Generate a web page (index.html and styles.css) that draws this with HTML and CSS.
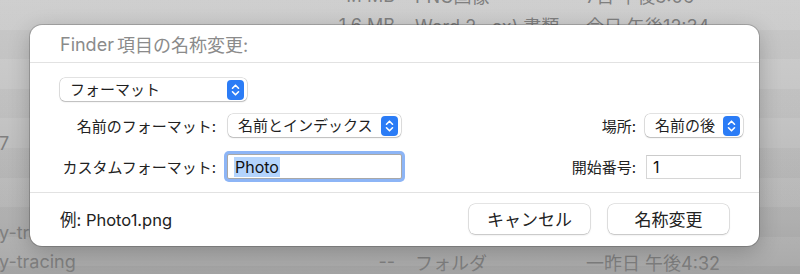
FILE: index.html
```html
<!DOCTYPE html>
<html lang="ja">
<head>
<meta charset="utf-8">
<title>Finder項目の名称変更</title>
<link rel="stylesheet" href="styles.css">
</head>
<body>
<div class="finder">
  <div class="frow"><span class="fname"></span><span class="fsize">1.1 MB</span><span class="fkind">PNG画像</span><span class="fdate">7日 午後3:06</span></div>
  <div class="frow"><span class="fname"></span><span class="fsize">1.6 MB</span><span class="fkind">Word 2...ex) 書類</span><span class="fdate">今日 午後12:34</span></div>
  <div class="frow"><span class="fname"></span><span class="fsize"></span><span class="fkind"></span><span class="fdate"></span></div>
  <div class="frow"><span class="fname"></span><span class="fsize"></span><span class="fkind"></span><span class="fdate"></span></div>
  <div class="frow"><span class="fname"></span><span class="fsize"></span><span class="fkind"></span><span class="fdate"></span></div>
  <div class="frow"><span class="fname">7</span><span class="fsize"></span><span class="fkind"></span><span class="fdate"></span></div>
  <div class="frow"><span class="fname"></span><span class="fsize"></span><span class="fkind"></span><span class="fdate"></span></div>
  <div class="frow"><span class="fname"></span><span class="fsize"></span><span class="fkind"></span><span class="fdate"></span></div>
  <div class="frow"><span class="fname">y-tracing</span><span class="fsize"></span><span class="fkind"></span><span class="fdate"></span></div>
  <div class="frow"><span class="fname">y-tracing</span><span class="fsize">--</span><span class="fkind">フォルダ</span><span class="fdate">一昨日 午後4:32</span></div>
</div>

<div class="sheet">
  <div class="sheet-title"><span class="app">Finder</span>項目の名称変更:</div>
  <div class="sheet-body">
    <div class="popup popup-format">
      <span>フォーマット</span>
      <svg class="stepper" viewBox="0 0 17 20" width="17" height="20"><rect x="0" y="0" width="17" height="20" rx="4" fill="#2b7cf6"/><path d="M5.5 8.2 L8.5 5.2 L11.5 8.2 M5.5 11.8 L8.5 14.8 L11.5 11.8" fill="none" stroke="#fff" stroke-width="1.6" stroke-linecap="round" stroke-linejoin="round"/></svg>
    </div>
    <div class="form-grid">
      <label class="lbl">名前のフォーマット:</label>
      <div class="popup popup-name">
        <span>名前とインデックス</span>
        <svg class="stepper" viewBox="0 0 17 20" width="17" height="20"><rect x="0" y="0" width="17" height="20" rx="4" fill="#2b7cf6"/><path d="M5.5 8.2 L8.5 5.2 L11.5 8.2 M5.5 11.8 L8.5 14.8 L11.5 11.8" fill="none" stroke="#fff" stroke-width="1.6" stroke-linecap="round" stroke-linejoin="round"/></svg>
      </div>
      <span class="spacer"></span>
      <label class="lbl">場所:</label>
      <div class="popup popup-place">
        <span>名前の後</span>
        <svg class="stepper" viewBox="0 0 17 20" width="17" height="20"><rect x="0" y="0" width="17" height="20" rx="4" fill="#2b7cf6"/><path d="M5.5 8.2 L8.5 5.2 L11.5 8.2 M5.5 11.8 L8.5 14.8 L11.5 11.8" fill="none" stroke="#fff" stroke-width="1.6" stroke-linecap="round" stroke-linejoin="round"/></svg>
      </div>

      <label class="lbl">カスタムフォーマット:</label>
      <div class="field field-focus"><span class="sel">Photo</span></div>
      <span class="spacer"></span>
      <label class="lbl">開始番号:</label>
      <div class="field field-num">1</div>
    </div>
  </div>
  <div class="sheet-footer">
    <span class="example">例: Photo1.png</span>
    <div class="buttons">
      <button class="btn">キャンセル</button>
      <button class="btn">名称変更</button>
    </div>
  </div>
</div>
</body>
</html>
```

FILE: styles.css
```css
* { box-sizing: border-box; }

html, body {
  margin: 0;
  padding: 0;
}

body {
  width: 800px;
  height: 274px;
  overflow: hidden;
  position: relative;
  font-family: "Inter", "Noto Sans CJK JP", sans-serif;
  background:
    repeating-linear-gradient(180deg, rgba(255,255,255,0.035) 0 29.6px, rgba(0,0,0,0.02) 29.6px 59.2px),
    linear-gradient(180deg, #cdcdcd 0%, #c3c3c3 40%, #b2b2b2 80%, #a6a6a6 100%);
}

/* Finder list behind the sheet */
.finder {
  margin-top: -19.4px;
  color: #7f7f7f;
  font-size: 18px;
}

.frow {
  display: flex;
  align-items: center;
  height: 29.6px;
  white-space: nowrap;
}

.fname {
  width: 336px;
  margin-left: -1px;
}

.fsize {
  width: 60px;
  text-align: right;
}

.fkind {
  width: 171px;
  margin-left: 20px;
}

/* Sheet */
.sheet {
  position: absolute;
  left: 30px;
  top: 25px;
  width: 729px;
  height: 221px;
  background: #ffffff;
  border-radius: 12px;
  box-shadow: 0 0 0 1px rgba(0,0,0,0.18), 0 6px 22px rgba(0,0,0,0.22);
  display: flex;
  flex-direction: column;
  color: #222;
}

.sheet-title {
  height: 38px;
  border-bottom: 1px solid #e2e2e2;
  display: flex;
  align-items: center;
  padding-left: 30px;
  font-size: 18px;
  color: #8b8b8b;
  padding-top: 1px;
}

.sheet-title .app {
  margin-right: 3px;
}

.sheet-body {
  padding: 15px 16px 13px 30px;
  border-bottom: 1px solid #e2e2e2;
}

.popup {
  display: flex;
  align-items: center;
  justify-content: space-between;
  height: 23px;
  background: #fff;
  border-radius: 5px;
  box-shadow: 0 0 0 0.5px rgba(0,0,0,0.22), 0 1px 1.5px rgba(0,0,0,0.18);
  padding-left: 10px;
  padding-right: 3px;
  font-size: 15px;
  color: #1f1f1f;
}

.popup span {
  line-height: 1;
}

.stepper {
  display: block;
  flex: none;
}

.popup-format {
  width: 187px;
}

.form-grid {
  margin-top: 13px;
  display: grid;
  grid-template-columns: 156px 176px 1fr auto 97px;
  column-gap: 10px;
  row-gap: 17px;
  align-items: center;
}

.lbl {
  font-size: 15px;
  text-align: right;
  color: #222;
  white-space: nowrap;
}

.popup-name {
  margin-left: 2px;
  width: 173px;
  padding-left: 10px;
}

.popup-place {
  margin-left: -1px;
  width: 98px;
  padding-left: 10px;
}

.field {
  height: 25px;
  display: flex;
  align-items: center;
  background: #fff;
  font-size: 16px;
  color: #111;
}

.field-focus {
  margin-left: 1px;
  border: 1px solid #a8a8a8;
  border-radius: 2px;
  box-shadow: 0 0 0 3px #8db5f6;
  padding-left: 6px;
}

.sel {
  background: #b4d4fd;
  line-height: 20px;
  padding: 0 1px;
}

.field-num {
  height: 24px;
  width: 95px;
  border: 1px solid #d6d6d6;
  border-top-color: #cbcbcb;
  padding-left: 6px;
}

.sheet-footer {
  flex: 1;
  display: flex;
  align-items: center;
  justify-content: space-between;
  padding: 0 30px 2px 30px;
}

.example {
  font-size: 16.5px;
  color: #222;
}

.buttons {
  display: flex;
  gap: 18px;
}

.btn {
  width: 121px;
  height: 30px;
  border: none;
  border-radius: 6px;
  background: #fff;
  box-shadow: 0 0 0 0.5px rgba(0,0,0,0.2), 0 1px 2px rgba(0,0,0,0.16);
  font-family: "Inter", "Noto Sans CJK JP", sans-serif;
  font-size: 17px;
  color: #222;
  padding: 0;
}
```
